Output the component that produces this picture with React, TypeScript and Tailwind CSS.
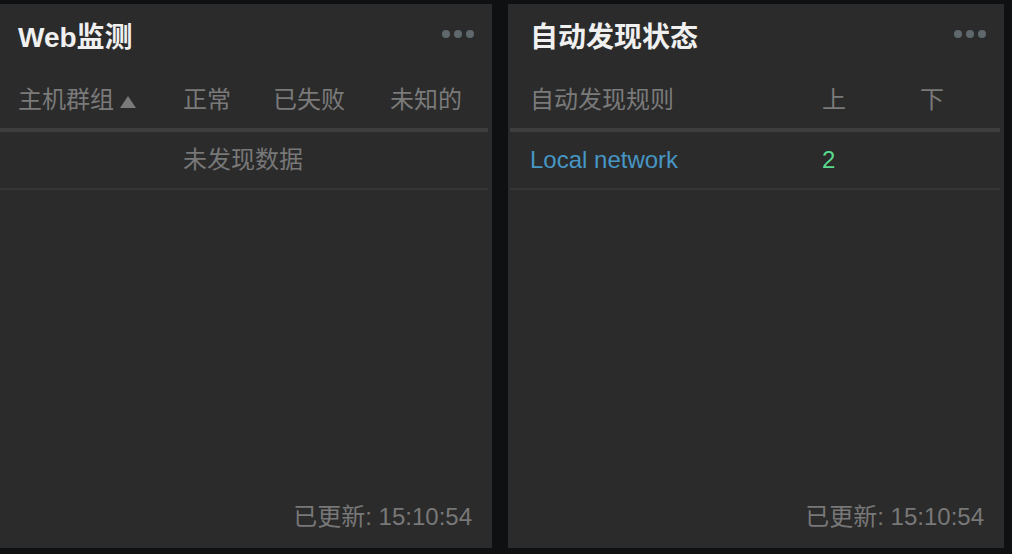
import React from "react";

const font = { fontFamily: '"Liberation Sans", "Noto Sans CJK SC", sans-serif' };

function Dots() {
  return (
    <div className="flex gap-1 mt-[8px]">
      <span className="w-2 h-2 rounded-full bg-[#5f686e]" />
      <span className="w-2 h-2 rounded-full bg-[#5f686e]" />
      <span className="w-2 h-2 rounded-full bg-[#5f686e]" />
    </div>
  );
}

function Panel({ title, children }: { title: string; children: React.ReactNode }) {
  return (
    <div className="w-[496px] h-[544px] shrink-0 bg-[#2b2b2b] flex flex-col">
      <div className="flex justify-between items-start h-[68px] pl-[22px] pr-[18px] pt-[18px]">
        <div className="text-[28px] leading-[32px] font-bold text-[#f0f0f0]">{title}</div>
        <Dots />
      </div>
      <div className="ml-[2px] mr-1">{children}</div>
      <div className="mt-auto text-right pr-5 pb-[17px] text-[24px] leading-[28px] text-[#787878]">
        已更新: 15:10:54
      </div>
    </div>
  );
}

export default function App() {
  return (
    <div className="w-[1012px] h-[554px] bg-[#0f1012] overflow-hidden pt-1" style={font}>
      <div className="flex gap-4 -ml-1">
        <Panel title="Web监测">
          <div className="grid grid-cols-[165px_90px_117px_1fr] h-[60px] items-center border-b-4 border-[#3e3e3e] text-[24px] text-[#7a7a7a]">
            <div className="pl-5 flex items-center gap-[6px]">
              <span>主机群组</span>
              <svg width="16" height="12" viewBox="0 0 16 12" className="mt-[3px]">
                <polygon points="8,0 16,12 0,12" fill="#7a7a7a" />
              </svg>
            </div>
            <div className="pl-5">正常</div>
            <div className="pl-5">已失败</div>
            <div className="pl-5">未知的</div>
          </div>
          <div className="h-[58px] flex items-center justify-center border-b-2 border-[#363636] text-[24px] text-[#787878]">
            未发现数据
          </div>
        </Panel>
        <Panel title="自动发现状态">
          <div className="grid grid-cols-[292px_98px_1fr] h-[60px] items-center border-b-4 border-[#3e3e3e] text-[24px] text-[#7a7a7a]">
            <div className="pl-5">自动发现规则</div>
            <div className="pl-5">上</div>
            <div className="pl-5">下</div>
          </div>
          <div className="grid grid-cols-[292px_98px_1fr] h-[58px] items-center border-b-2 border-[#363636] text-[24px]">
            <div className="pl-5 text-[#4796c4]">Local network</div>
            <div className="pl-5 text-[#59db8f]">2</div>
            <div className="pl-5"></div>
          </div>
        </Panel>
      </div>
    </div>
  );
}
